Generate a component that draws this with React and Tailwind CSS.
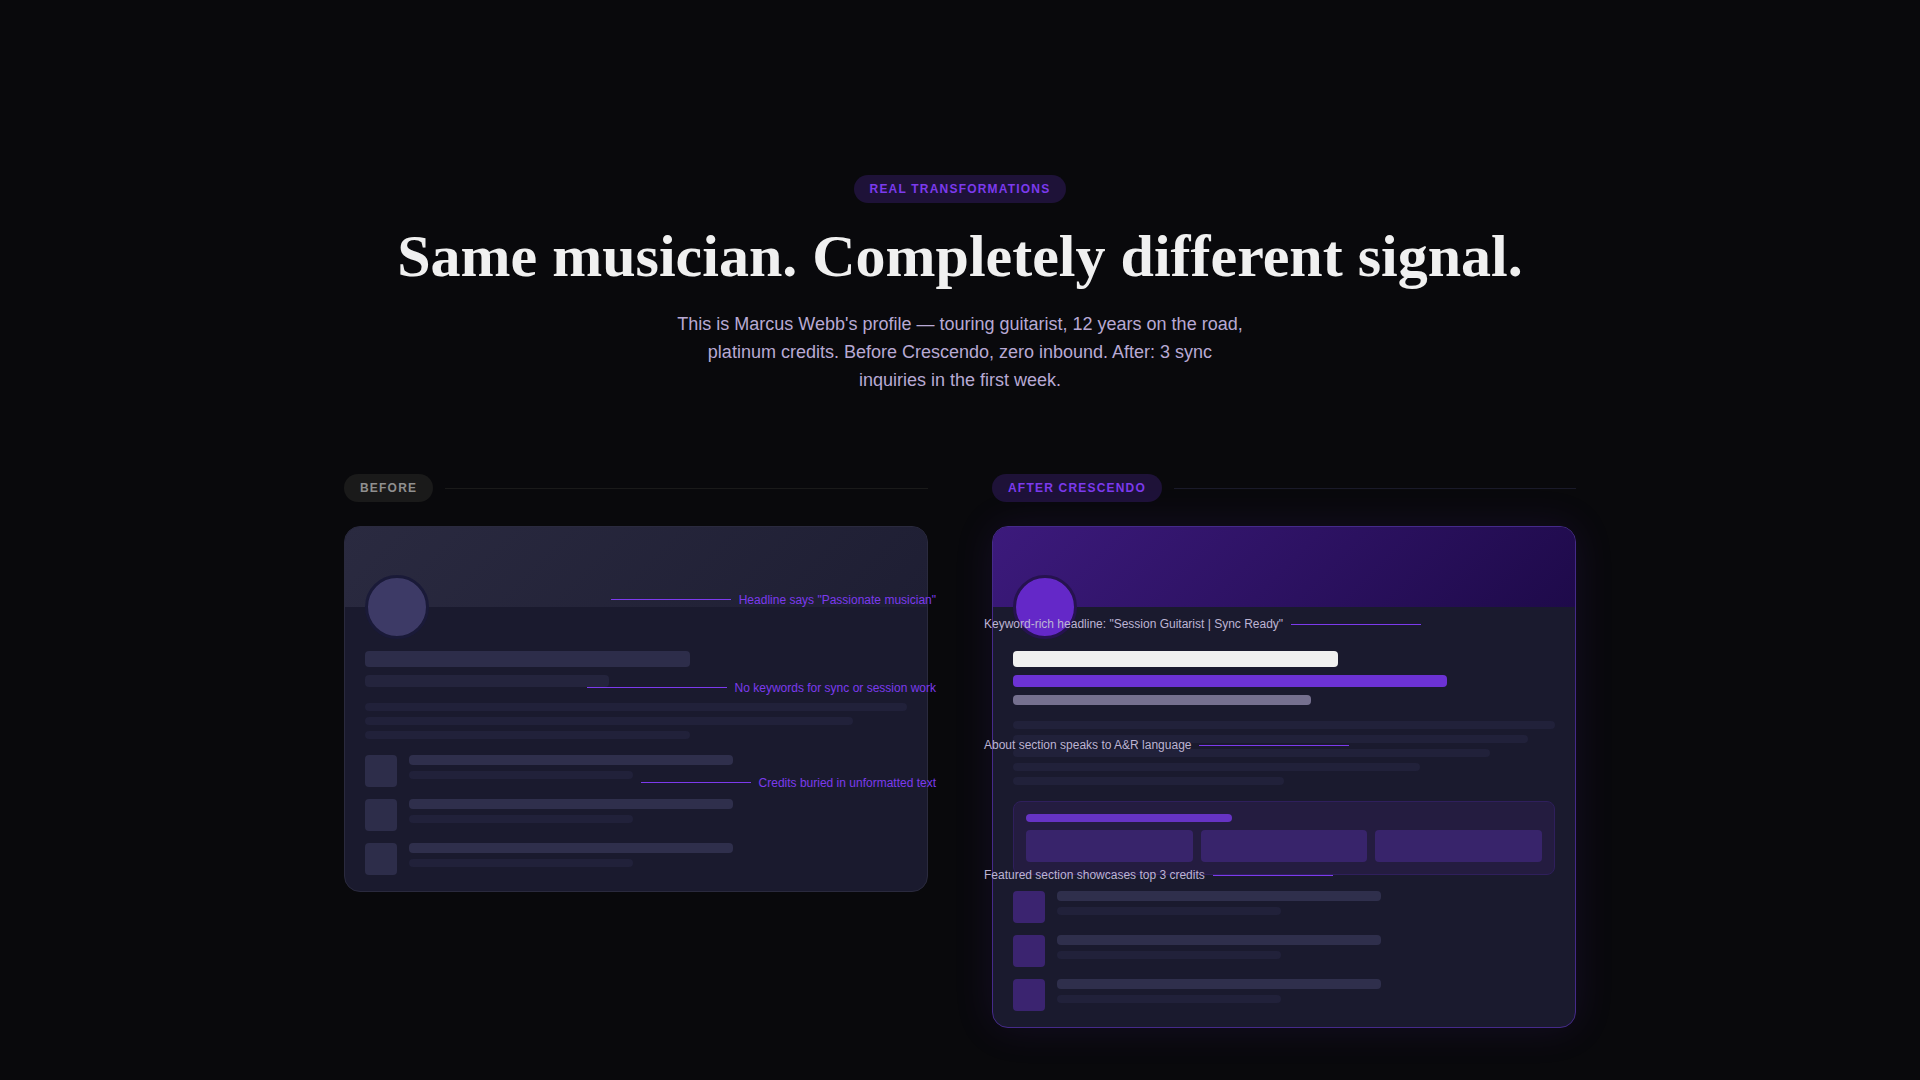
import React from 'react';

const beforeNotes = [
  { text: 'Headline says "Passionate musician"', top: 'top-[66px]', line: 'w-[120px]' },
  { text: 'No keywords for sync or session work', top: 'top-[154px]', line: 'w-[140px]' },
  { text: 'Credits buried in unformatted text', top: 'top-[249px]', line: 'w-[110px]' },
];

const afterNotes = [
  { text: 'Keyword-rich headline: "Session Guitarist | Sync Ready"', top: 'top-[90px]', line: 'w-[130px]' },
  { text: 'About section speaks to A&R language', top: 'top-[211px]', line: 'w-[150px]' },
  { text: 'Featured section showcases top 3 credits', top: 'top-[341px]', line: 'w-[120px]' },
];

const CreditRows = ({ thumb }) => (
  <div className="flex flex-col gap-3">
    {[0, 1, 2].map((i) => (
      <div key={i} className="flex gap-3">
        <div className={`w-8 h-8 rounded shrink-0 ${thumb}`} />
        <div className="flex-1 flex flex-col gap-1.5">
          <div className="h-2.5 w-[65%] rounded-sm bg-[#2f2f4c]" />
          <div className="h-2 w-[45%] rounded-sm bg-[#21213a]" />
        </div>
      </div>
    ))}
  </div>
);

const Label = ({ children, pill, line }) => (
  <div className="flex items-center gap-3 mb-6">
    <span className={`h-7 px-4 rounded-full text-xs leading-7 font-bold tracking-[0.1em] uppercase ${pill}`}>{children}</span>
    <div className={`flex-1 h-px ${line}`} />
  </div>
);

const App = () => {
  return (
    <section className="min-h-screen bg-[#09090c] pt-[175px] pb-[52px] font-['Liberation_Sans',Arial,sans-serif]">
      <div className="flex flex-col items-center text-center">
        <span className="h-7 px-4 rounded-full bg-[#1e1238] text-[#7c3aed] text-xs leading-7 font-bold tracking-[0.1em] uppercase">
          Real Transformations
        </span>
        <h1 className="mt-[19px] text-[60px] leading-[68px] font-bold text-[#f0f0f0] font-['Liberation_Serif','Times_New_Roman',serif]">
          Same musician. Completely different signal.
        </h1>
        <p className="mt-5 w-[570px] text-lg leading-7 text-[#b8a9d4]">
          This is Marcus Webb's profile — touring guitarist, 12 years on the road, platinum credits. Before Crescendo, zero inbound. After: 3 sync inquiries in the first week.
        </p>
      </div>

      <div className="w-[1232px] mx-auto mt-20 grid grid-cols-2 gap-16 items-start">
        <div>
          <Label pill="bg-[#1a1a1a] text-[#8f8f8f]" line="bg-[#1a1a1a]">Before</Label>
          <div className="relative">
            <div className="rounded-2xl overflow-hidden border border-[#2a2a3e] bg-[#1a1a2e]">
              <div className="h-20 bg-[linear-gradient(135deg,#2a2a40,#1e1e33)]" />
              <div className="px-5 pb-4">
                <div className="w-16 h-16 -mt-8 mb-3 rounded-full bg-[#3d3a66] border-[3px] border-[#1a1a38] relative" />
                <div className="h-4 w-[60%] rounded bg-[#2d2d4a]" />
                <div className="h-3 w-[45%] mt-2 rounded-sm bg-[#24243d]" />
                <div className="flex flex-col gap-1.5 mt-4 mb-4">
                  <div className="h-2 w-full rounded-sm bg-[#21213a]" />
                  <div className="h-2 w-[90%] rounded-sm bg-[#21213a]" />
                  <div className="h-2 w-[60%] rounded-sm bg-[#21213a]" />
                </div>
                <CreditRows thumb="bg-[#2d2d4a]" />
              </div>
            </div>
            {beforeNotes.map((n) => (
              <div key={n.text} className={`absolute right-[-8px] ${n.top} h-4 flex items-center gap-2`}>
                <div className={`h-px -mt-0.5 ${n.line} bg-[#7c3aed]`} />
                <span className="text-xs leading-4 whitespace-nowrap text-[#7c3aed]">{n.text}</span>
              </div>
            ))}
          </div>
        </div>

        <div>
          <Label pill="bg-[#1e1238] text-[#7c3aed]" line="bg-[#1a1a2a]">After Crescendo</Label>
          <div className="relative">
            <div className="rounded-2xl overflow-hidden border border-[#452a8a] bg-[#1a1a2e] shadow-[0_0_40px_rgba(107,47,217,0.12)]">
              <div className="h-20 bg-[linear-gradient(135deg,#3c1a7c,#1e0a4a)]" />
              <div className="px-5 pb-4">
                <div className="w-16 h-16 -mt-8 mb-3 rounded-full bg-[#6428c8] border-[3px] border-[#26134f] relative" />
                <div className="h-4 w-[60%] rounded bg-[#f0f0f0]" />
                <div className="h-3 w-[80%] mt-2 rounded-sm bg-[#6c32d4]" />
                <div className="h-2.5 w-[55%] mt-2 rounded-sm bg-[#75708f]" />
                <div className="flex flex-col gap-1.5 mt-4 mb-4">
                  <div className="h-2 w-full rounded-sm bg-[#21213a]" />
                  <div className="h-2 w-[95%] rounded-sm bg-[#21213a]" />
                  <div className="h-2 w-[88%] rounded-sm bg-[#21213a]" />
                  <div className="h-2 w-[75%] rounded-sm bg-[#21213a]" />
                  <div className="h-2 w-[50%] rounded-sm bg-[#21213a]" />
                </div>
                <div className="mb-4 p-3 rounded-lg border border-[#2f1f5c] bg-[#241c40]">
                  <div className="h-2 w-[40%] mb-2 rounded-sm bg-[#6633c4]" />
                  <div className="grid grid-cols-3 gap-2">
                    <div className="h-8 rounded bg-[#38246b]" />
                    <div className="h-8 rounded bg-[#38246b]" />
                    <div className="h-8 rounded bg-[#38246b]" />
                  </div>
                </div>
                <CreditRows thumb="bg-[#3b2470]" />
              </div>
            </div>
            {afterNotes.map((n) => (
              <div key={n.text} className={`absolute left-[-8px] ${n.top} h-4 flex items-center gap-2`}>
                <span className="text-xs leading-4 whitespace-nowrap text-[#bdb4d4]">{n.text}</span>
                <div className={`h-px ${n.line} bg-[#7c3aed]`} />
              </div>
            ))}
          </div>
        </div>
      </div>
    </section>
  );
};

export default App;
